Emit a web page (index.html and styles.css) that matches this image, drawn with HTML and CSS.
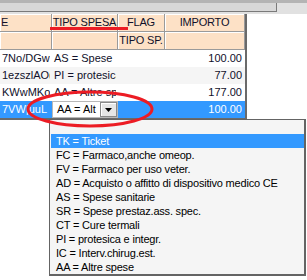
FILE: index.html
```html
<!DOCTYPE html>
<html lang="it">
<head>
  <meta charset="UTF-8">
  <title>Spese</title>
  <link rel="stylesheet" href="styles.css">
</head>
<body>

<!-- toolbar strip above the grid -->
<div class="topbar">
  <div class="panel"></div>
</div>

<div class="grid">
  <div class="hrow">
    <div class="hcell left">E</div>
    <div class="hcell">TIPO SPESA</div>
    <div class="hcell">FLAG</div>
    <div class="hcell">IMPORTO</div>
  </div>
  <div class="hrow">
    <div class="hcell"></div>
    <div class="hcell"></div>
    <div class="hcell">TIPO SP.</div>
    <div class="hcell"></div>
  </div>

  <div class="row">
    <div class="cell">7No/DGw1</div>
    <div class="cell">AS = Spese</div>
    <div class="cell"></div>
    <div class="cell num">100.00</div>
  </div>
  <div class="row alt">
    <div class="cell">1ezszlAO(</div>
    <div class="cell">PI = protesica</div>
    <div class="cell"></div>
    <div class="cell num">77.00</div>
  </div>
  <div class="row">
    <div class="cell">KWwMKo</div>
    <div class="cell">AA = Altre sp</div>
    <div class="cell"></div>
    <div class="cell num">177.00</div>
  </div>
  <div class="row selected">
    <div class="cell">7VW|uuL</div>
    <div class="cell combo-cell">
      <div class="combo">
        <span class="combo-text">AA = Alt</span>
        <span class="combo-btn">
          <svg width="7" height="4" viewBox="0 0 7 4"><path d="M0 0h7L3.5 4z" fill="#000"/></svg>
        </span>
      </div>
    </div>
    <div class="cell"></div>
    <div class="cell num">100.00</div>
  </div>
</div>

<!-- open dropdown of the TIPO SPESA combo -->
<ul class="droplist">
  <li>&nbsp;</li>
  <li class="hl">TK = Ticket</li>
  <li>FC = Farmaco,anche omeop.</li>
  <li>FV = Farmaco per uso veter.</li>
  <li>AD = Acquisto o affitto di dispositivo medico CE</li>
  <li>AS = Spese sanitarie</li>
  <li>SR = Spese prestaz.ass. spec.</li>
  <li>CT = Cure termali</li>
  <li>PI = protesica e integr.</li>
  <li>IC = Interv.chirug.est.</li>
  <li>AA = Altre spese</li>
</ul>

<!-- red annotation marks -->
<svg class="marks" width="307" height="280" viewBox="0 0 307 280">
  <rect x="50" y="27" width="78" height="3" fill="#ec1c24"/>
  <ellipse cx="90" cy="109" rx="62" ry="17" fill="none" stroke="#ec1c24" stroke-width="3"/>
</svg>

</body>
</html>
```

FILE: styles.css
```css
body {
  margin: 0;
  background: #fff;
  font-family: "Liberation Sans", Arial, sans-serif;
  font-size: 11px;
  color: #10102a;
  width: 307px;
  height: 280px;
  overflow: hidden;
  position: relative;
}

.topbar {
  height: 14px;
  background: #e1e1e1;
  border-top: 3px solid #b4b4b4;
  box-sizing: border-box;
}

.panel {
  width: 277px;
  height: 9px;
  box-sizing: border-box;
  border-right: 1px solid #7a7a7a;
  border-bottom: 1px solid #7a7a7a;
  background: #d8d8d8;
}

.grid {
  width: 247px;
  border-right: 2px solid #6a6a6a;
  border-bottom: 2px solid #6a6a6a;
  box-sizing: border-box;
}

.hrow, .row {
  display: grid;
  grid-template-columns: 52px 66px 47px 80px;
}

.hcell {
  height: 17px;
  line-height: 16px;
  background: #fde1c6;
  border-right: 1px solid #9a9a9a;
  border-bottom: 1px solid #9a9a9a;
  box-shadow: inset 1px 1px 0 #fff;
  text-align: center;
  white-space: nowrap;
  overflow: hidden;
  letter-spacing: -0.2px;
}

.hcell.left {
  text-align: left;
  padding-left: 1px;
}

.row {
  height: 17px;
  line-height: 17px;
}

.row.alt {
  background: #f5f5f5;
}

.row.selected {
  background: #3399ff;
  color: #fff;
}

.cell {
  white-space: nowrap;
  overflow: hidden;
  padding-left: 2px;
  margin-right: 2px;
}

.cell.num {
  text-align: right;
  padding-right: 3px;
  margin-right: 0;
}

.combo-cell {
  padding: 0;
  margin-right: 0;
  background: #fff;
}

.combo {
  display: flex;
  height: 17px;
  box-sizing: border-box;
  border: 1px solid #b8b8b8;
  color: #000;
}

.combo-text {
  flex: 1;
  padding-left: 4px;
  line-height: 15px;
  overflow: hidden;
}

.combo-btn {
  width: 15px;
  display: flex;
  align-items: center;
  justify-content: center;
  background: #e6e6e6;
  border: 1px solid #8a8a8a;
  box-shadow: inset 1px 1px 0 #fff;
}

.droplist {
  position: absolute;
  left: 49px;
  top: 119px;
  width: 254px;
  margin: 0;
  padding: 0;
  list-style: none;
  background: #f5f5f5;
  border: 1px solid #646464;
  border-right-width: 2px;
  border-bottom-width: 2px;
  color: #000;
}

.droplist li {
  height: 14px;
  line-height: 14px;
  padding-left: 5px;
  margin-left: 1px;
  white-space: nowrap;
  letter-spacing: -0.2px;
}

.droplist li.hl {
  background: #3399ff;
  color: #fff;
}

.marks {
  position: absolute;
  left: 0;
  top: 0;
  pointer-events: none;
}
```
